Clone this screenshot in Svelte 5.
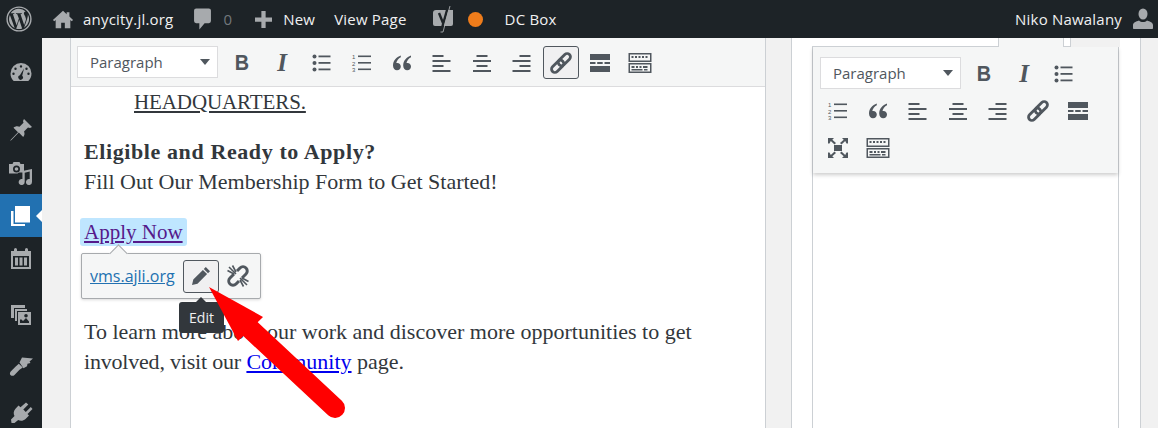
<script>
  const menu = [
    { id: 'gauge', h: 70 },
    { id: 'pin', h: 44 },
    { id: 'media', h: 42 },
    { id: 'pages', h: 43, active: true },
    { id: 'calendar', h: 44 },
    { id: 'gallery', h: 68 },
    { id: 'brush', h: 34 },
    { id: 'plugin', h: 60 }
  ];
  const mainTools = ['bold', 'italic', 'ul', 'ol', 'quote', 'left', 'center', 'right', 'link', 'more', 'kbd'];
  const sideTools = ['bold', 'italic', 'ul', 'ol', 'quote', 'left', 'center', 'right', 'link', 'more', 'full', 'kbd'];
</script>

{#snippet tool(name)}
  {#if name === 'bold'}
    <span class="glyph bold">B</span>
  {:else if name === 'italic'}
    <span class="glyph italic">I</span>
  {:else}
    <svg width="26" height="26" viewBox="0 0 26 26" fill="currentColor">
      {#if name === 'ul'}
        <circle cx="5.500" cy="6.500" r="2" /><circle cx="5.500" cy="13" r="2" /><circle cx="5.500" cy="19.500" r="2" />
        <rect x="9.500" y="5.500" width="12" height="1.800" /><rect x="9.500" y="12" width="12" height="1.800" /><rect x="9.500" y="18.500" width="12" height="1.800" />
      {:else if name === 'ol'}
        <text x="3" y="9" class="nums">1</text><text x="3" y="15.500" class="nums">2</text><text x="3" y="22" class="nums">3</text>
        <rect x="9" y="5.500" width="13" height="1.600" /><rect x="9" y="12" width="13" height="1.600" /><rect x="9" y="18.500" width="13" height="1.600" />
      {:else if name === 'quote'}
        <path d="M11.800 5.500C7.500 7 4 10.400 4 15.500c0 3 1.800 4.800 4 4.800s3.800-1.700 3.800-3.800-1.500-3.600-3.500-3.600c-.4 0-.8.100-1 .200.3-2.200 2.200-4.600 4.500-5.800z" />
        <path d="M22 5.500C17.700 7 14.200 10.400 14.200 15.500c0 3 1.800 4.800 4 4.800S22 18.600 22 16.500s-1.500-3.600-3.500-3.600c-.4 0-.8.100-1 .200.3-2.200 2.200-4.600 4.500-5.800z" />
      {:else if name === 'left'}
        <rect x="3.500" y="5" width="11" height="2" /><rect x="3.500" y="10" width="18" height="2" /><rect x="3.500" y="15" width="11" height="2" /><rect x="3.500" y="20" width="18" height="2" />
      {:else if name === 'center'}
        <rect x="7.500" y="5" width="11" height="2" /><rect x="4" y="10" width="18" height="2" /><rect x="7.500" y="15" width="11" height="2" /><rect x="4" y="20" width="18" height="2" />
      {:else if name === 'right'}
        <rect x="10.500" y="5" width="11" height="2" /><rect x="3.500" y="10" width="18" height="2" /><rect x="10.500" y="15" width="11" height="2" /><rect x="3.500" y="20" width="18" height="2" />
      {:else if name === 'link'}
        <g transform="rotate(-45 13 13)" fill="none" stroke="currentColor" stroke-width="2.800">
          <rect x="1" y="9.700" width="14.500" height="6.600" rx="3.300" />
          <rect x="10.500" y="9.700" width="14.500" height="6.600" rx="3.300" />
        </g>
      {:else if name === 'more'}
        <rect x="3" y="4" width="20" height="6" /><rect x="3" y="12" width="5.500" height="2" /><rect x="10.200" y="12" width="5.500" height="2" /><rect x="17.500" y="12" width="5.500" height="2" /><rect x="3" y="16" width="20" height="6" />
      {:else if name === 'full'}
        <rect x="9" y="10" width="8" height="6" />
        <path d="M3 3h6L7.300 4.700 11 8 9.500 9.500 5.800 6 4.500 8.500H3zM23 3h-6l1.700 1.700L15 8l1.500 1.500L20.200 6l1.300 2.500H23zM3 23h6l-1.700-1.700L11 18l-1.500-1.500L5.800 20l-1.300-2.500H3zM23 23h-6l1.700-1.700L15 18l1.500-1.500 3.700 3.500 1.300-2.500H23z" />
      {:else if name === 'kbd'}
        <path fill-rule="evenodd" d="M1.500 3h23v9h-23zM3 4.500v6h20v-6zM1.500 13h23v10h-23zM3 14.500v7h20v-7z" />
        <path d="M4.500 6h2v2h-2zM8 6h2v2H8zM11.500 6h2v2h-2zM15 6h2v2h-2zM18.500 6h2v2h-2zM4.500 16h3v2h-3zM9 16h2v2H9zM12.500 16h2v2h-2zM16 16h4.500v2H16zM4.500 19h11v1.500h-11zM17 19h3.500v1.500H17z" />
      {/if}
    </svg>
  {/if}
{/snippet}

{#snippet menuIcon(id)}
  <svg width="24" height="24" viewBox="0 0 24 24" fill="currentColor">
    {#if id === 'gauge'}
      <path fill-rule="evenodd" d="M12 2A10.500 10.500 0 0 0 1.500 12.500c0 3 1.200 5.700 3.200 7.500h14.600c2-1.800 3.200-4.500 3.200-7.500A10.500 10.500 0 0 0 12 2zM12 4.200a1.200 1.200 0 1 1 0 2.400 1.200 1.200 0 0 1 0-2.400zM6.500 6.500a1.200 1.200 0 1 1 0 2.400 1.200 1.200 0 0 1 0-2.400zM17.500 6.500a1.200 1.200 0 1 1 0 2.400 1.200 1.200 0 0 1 0-2.400zM4.500 11.500a1.200 1.200 0 1 1 0 2.400 1.200 1.200 0 0 1 0-2.400zM19.500 11.500a1.200 1.200 0 1 1 0 2.400 1.200 1.200 0 0 1 0-2.400zM15 7.500l-1.800 7.200a2.300 2.300 0 1 1-2.300-.5z" />
    {:else if id === 'pin'}
      <path d="M15 1l8 8-2 1-2-.5-4 4c1 2 .5 4-.8 5.500l-4.400-4.400L2.500 22 1 23l1-1.500 7-7.300-4.500-4.500C6 8.200 8.500 7.700 10.500 8.700l4-4L14 3z" />
    {:else if id === 'media'}
      <path fill-rule="evenodd" d="M0 3h3.500l1-2h6l1 2H15v8.500h-4.500c-.8 0-1.500.4-1.900 1H0zM7.500 4.500a3.500 3.500 0 1 0 0 7 3.500 3.500 0 0 0 0-7z" />
      <circle cx="7.500" cy="8" r="1.800" />
      <path d="M23 8v13a3 3 0 1 1-2.300-2.900V10.500l-5 1.200V21a3 3 0 1 1-2.300-2.900V10z" />
    {:else if id === 'pages'}
      <path d="M2 7h2.500v13H16v2H2z" />
      <rect x="6" y="2" width="15" height="16.500" />
    {:else if id === 'calendar'}
      <path fill-rule="evenodd" d="M2 4h3V2.500a1.500 1.500 0 0 1 3 0V4h8V2.500a1.500 1.500 0 0 1 3 0V4h3v18H2zM4 9v11h16V9zM6 10.500h3v8H6zM10.500 10.500h3v8h-3zM15 10.500h3v8h-3z" />
    {:else if id === 'gallery'}
      <path d="M2 2h14v3H5v10H2z" />
      <path d="M6 6h12v2H8v10H6z" />
      <path fill-rule="evenodd" d="M9 9h13v13H9zM11 16.500V20h9v-1.500l-3-3.500-3 3-1.500-1.500zM17 11a1.800 1.800 0 1 0 0 3.600 1.800 1.800 0 0 0 0-3.600z" />
    {:else if id === 'brush'}
      <path d="M10.500 8.500L13 3.500l11 1-3.500 3 1 1.500-3 .8-.5 2.500-3.500 2z" />
      <path d="M9.800 9.800l4 3.700-3.300 2.300-5 5.200c-1 1-2.700 1.200-3.800.2s-1-2.800 0-3.800l5-5z" />
    {:else if id === 'plugin'}
      <path d="M18.500 3l2.300 2-5 5 2.500 2.500 5-5 1.700 2-5 5 1.500 1.500-3.500 3.500c-2.200 2-5 2.300-7.300 1L7 23.500H4L3.500 20l3.500-3.500c-1.300-2.300-1-5.200 1-7.300L11 6l2 1.800z" transform="translate(-1.500 -1.500)" />
    {/if}
  </svg>
{/snippet}

<div class="admin">
  <header class="bar">
    <div class="bar-left">
      <svg class="wp" width="26" height="26" viewBox="0 0 24 24">
        <circle cx="12" cy="12" r="11" fill="none" stroke="currentColor" stroke-width="1.300" />
        <path fill="currentColor" d="M2.800 12c0 3.600 2.100 6.800 5.200 8.300L3.600 8.200A9.200 9.200 0 0 0 2.800 12zM18.200 11.500c0-1.100-.4-1.900-.8-2.500-.5-.8-.9-1.500-.9-2.300 0-.9.700-1.700 1.600-1.700h.1A9.200 9.200 0 0 0 4.300 6.700h.6c1 0 2.500-.1 2.500-.1.500 0 .6.700.1.800 0 0-.5.100-1.100.1l3.400 10.200 2.100-6.200-1.500-4c-.5 0-1-.1-1-.1-.5 0-.5-.8 0-.8 0 0 1.600.1 2.500.1 1 0 2.500-.1 2.500-.1.500 0 .6.700.1.800 0 0-.5.100-1.100.1l3.400 10.100 1-3.100c.4-1.300.7-2.200.7-3zM12.200 12.800l-2.800 8.100a9.200 9.200 0 0 0 5.600-.1l-.1-.1zM20.100 7.600c0 .3.100.6.100 1 0 .9-.2 2-.7 3.300l-2.800 8.100A9.200 9.200 0 0 0 20.100 7.600z" />
      </svg>
      <span class="item home">
        <svg width="22" height="22" viewBox="0 0 24 24" fill="currentColor"><path d="M12 3L1 13l1.500 1.500L4 13.200V22h6v-6h4v6h6v-8.800l1.500 1.300L23 13l-4-3.600V4.500h-3v2.200z" /></svg>
        <span class="label">anycity.jl.org</span>
      </span>
      <span class="item comments">
        <svg width="19" height="24" viewBox="0 0 18 22" fill="currentColor"><path d="M3 1h12a2 2 0 0 1 2 2v10a2 2 0 0 1-2 2h-4l-5 6v-6H3a2 2 0 0 1-2-2V3a2 2 0 0 1 2-2z" /></svg>
        <span class="count">0</span>
      </span>
      <span class="item new">
        <svg width="17" height="17" viewBox="0 0 16 16" fill="currentColor"><path d="M6 0h4v6h6v4h-6v6H6v-6H0V6h6z" /></svg>
        <span class="label">New</span>
      </span>
      <span class="label view">View Page</span>
      <svg class="yoast" width="24" height="30" viewBox="0 0 24 30">
        <path fill="currentColor" d="M4 6h17a2 2 0 0 1 0 0v14a2 2 0 0 1-2 2H3a2 2 0 0 1-2-2V9a3 3 0 0 1 3-3z" />
        <path fill="none" stroke="#1d2327" stroke-width="2.400" d="M7 9l4 10M16 2.500L9 27.500" />
        <path fill="none" stroke="currentColor" stroke-width=".9" d="M18 2l-7 26H8.500" />
      </svg>
      <span class="dot"></span>
      <span class="label dc">DC Box</span>
    </div>
    <div class="bar-right">
      <span class="label">Niko Nawalany</span>
      <svg width="20" height="22" viewBox="0 0 20 22" fill="currentColor"><ellipse cx="10" cy="6" rx="4.500" ry="5.500" /><path d="M0 20v-3c0-2.500 3-3.500 6-4.500 1 1 2.500 1.500 4 1.500s3-.5 4-1.500c3 1 6 2 6 4.500v3c0 .6-.4 1-1 1H1c-.6 0-1-.4-1-1z" /></svg>
    </div>
  </header>

  <div class="body">
    <nav class="menu">
      {#each menu as m}
        <div class="menu-item" class:active={m.active} style="height: {m.h}px">
          {@render menuIcon(m.id)}
        </div>
      {/each}
    </nav>

    <main class="editor">
      <div class="toolbar">
        <div class="select">Paragraph<i class="caret"></i></div>
        {#each mainTools as t}
          <button class="tool" class:on={t === 'link'}>{@render tool(t)}</button>
        {/each}
      </div>
      <div class="content">
        <p class="hq"><u>HEADQUARTERS.</u></p>
        <p class="eligible"><strong>Eligible and Ready to Apply?</strong><br />Fill Out Our Membership Form to Get Started!</p>
        <p class="apply"><a class="selected" href="#apply">Apply Now</a></p>
        <div class="popup">
          <a class="url" href="#vms">vms.ajli.org</a>
          <button class="tool edit">
            <svg width="20" height="20" viewBox="0 0 20 20" fill="currentColor"><path d="M14.800 1l4.200 4.200-2 2L12.800 3zM11.900 3.900l4.200 4.200L6.500 17.700 1 19l1.300-5.500z" /></svg>
          </button>
          <span class="unlink">
            <svg width="24" height="24" viewBox="0 0 24 24" fill="none" stroke="currentColor" stroke-width="3">
              <path d="M11 7l3-3a4.200 4.200 0 0 1 6 6l-4 4" />
              <path d="M13 17l-3 3a4.200 4.200 0 0 1-6-6l4-4" />
              <path stroke-width="1.600" d="M10 10L3 3M10 8L6.500 1.500M8 10L1.500 6.500M14 14l7 7M14 16l3.500 6.500M16 14l6.500 3.500" />
            </svg>
          </span>
        </div>
        <div class="tip">Edit</div>
        <p class="learn">To learn more about our work and discover more opportunities to get<br /><span class="tight">involved, visit our</span> <a class="blue" href="#community">Community</a> page.</p>
      </div>
    </main>

    <aside class="side">
      <div class="tabs">
        <div class="tab-a"></div>
        <div class="tab-b"></div>
        <div class="tab-c"></div>
        <div class="tab-d"></div>
      </div>
      <div class="side-editor">
        <div class="side-toolbar">
          <div class="select">Paragraph<i class="caret"></i></div>
          {#each sideTools as t}
            <button class="tool">{@render tool(t)}</button>
          {/each}
        </div>
      </div>
    </aside>
  </div>

  <svg class="arrow" width="160" height="150" viewBox="0 0 160 150">
    <path fill="#ff0000" d="M9 9L63 39 38 63z" />
    <path stroke="#ff0000" stroke-width="20" stroke-linecap="round" d="M45 46L135 130" />
  </svg>
</div>

<style>
  :global(body) {
    margin: 0;
    background: #f1f1f1;
  }

  .admin {
    position: relative;
    width: 1158px;
    height: 428px;
    overflow: hidden;
    font-family: "Open Sans", "Liberation Sans", sans-serif;
    background: #f1f1f1;
  }

  /* top bar */
  .bar {
    height: 38px;
    background: #1d2327;
    color: #f0f0f1;
    display: flex;
    justify-content: space-between;
    align-items: center;
    font-size: 15px;
    letter-spacing: 0.2px;
  }

  .bar-left,
  .bar-right,
  .item {
    display: flex;
    align-items: center;
  }

  .bar-left svg,
  .bar-right svg {
    color: #a7aaad;
  }

  .wp {
    margin-left: 6px;
  }

  .home {
    margin-left: 20px;
    gap: 9px;
  }

  .comments {
    margin-left: 20px;
  }

  .count {
    color: #72777c;
    margin-left: 11px;
  }

  .new {
    margin-left: 23px;
    gap: 11px;
  }

  .view {
    margin-left: 19px;
  }

  .yoast {
    margin-left: 25px;
  }

  .dot {
    width: 15px;
    height: 15px;
    border-radius: 50%;
    background: #ee7c1b;
    margin-left: 12px;
  }

  .dc {
    margin-left: 22px;
  }

  .bar-right {
    gap: 11px;
    margin-right: 5px;
  }

  /* sidebar */
  .body {
    display: flex;
    height: 390px;
  }

  .menu {
    width: 42px;
    flex: none;
    background: #1d2327;
    color: #a7aaad;
  }

  .menu-item {
    position: relative;
    display: flex;
    align-items: center;
    justify-content: center;
  }

  .menu-item.active {
    background: #2271b1;
    color: #fff;
  }

  .menu-item.active::after {
    content: "";
    position: absolute;
    right: 0;
    top: 50%;
    margin-top: -6px;
    border: 6px solid transparent;
    border-right-color: #fff;
    border-left: 0;
  }

  /* main editor */
  .editor {
    width: 696px;
    flex: none;
    margin-left: 28px;
    box-sizing: border-box;
    background: #fff;
    border-left: 1px solid #ccd0d4;
    border-right: 1px solid #ccd0d4;
  }

  .toolbar {
    height: 49px;
    box-sizing: border-box;
    background: #f5f6f6;
    border-bottom: 1px solid #dcdcde;
    padding: 8px 6px 0;
    display: flex;
    align-items: flex-start;
    gap: 2px;
  }

  .select {
    width: 141px;
    height: 32px;
    box-sizing: border-box;
    background: #fff;
    border: 1px solid #dcdcde;
    color: #50575e;
    font-size: 15px;
    line-height: 31px;
    padding-left: 12px;
    position: relative;
    margin-right: 3px;
  }

  .side-toolbar .select {
    margin-left: 1px;
    margin-right: 2px;
  }

  .caret {
    position: absolute;
    right: 7px;
    top: 12px;
    border: 5px solid transparent;
    border-top: 6px solid #50575e;
    border-bottom: 0;
  }

  .tool {
    width: 38px;
    height: 33px;
    padding: 0;
    border: 1px solid transparent;
    border-radius: 3px;
    background: none;
    color: #50575e;
    display: flex;
    align-items: center;
    justify-content: center;
  }

  .tool.on,
  .tool.edit {
    border-color: #50575e;
    background: #f0f0f1;
    width: 36px;
  }

  .glyph {
    line-height: 1;
  }

  .glyph.bold {
    font-family: "Liberation Sans", sans-serif;
    font-size: 22px;
    font-weight: 700;
    transform: scaleX(0.9);
  }

  .glyph.italic {
    font-family: "Liberation Serif", serif;
    font-size: 25px;
    font-style: italic;
    font-weight: 700;
  }

  .nums {
    font: 6px "Liberation Sans", sans-serif;
  }

  /* content */
  .content {
    position: relative;
    font-family: "Liberation Serif", serif;
    font-size: 22px;
    line-height: 30px;
    color: #32373c;
    padding: 0 13px;
  }

  .content p {
    margin: 0;
  }

  .hq {
    padding: 0 0 0 50px;
    font-size: 21px;
    letter-spacing: -0.1px;
  }

  .eligible {
    padding-top: 20px;
  }

  .eligible strong {
    letter-spacing: 0.6px;
  }

  .apply {
    padding-top: 20px;
    font-size: 21px;
  }

  .selected {
    color: #551a8b;
    background: #bfe6ff;
    border-radius: 3px;
    padding: 2px 4px;
    margin-left: -4px;
  }

  .popup {
    position: absolute;
    left: 10px;
    top: 166px;
    width: 180px;
    height: 46px;
    box-sizing: border-box;
    background: #f5f6f6;
    border: 1px solid #a7aaad;
    border-radius: 2px;
    box-shadow: 0 1px 3px rgba(0, 0, 0, 0.15);
    display: flex;
    align-items: center;
    font-family: "Open Sans", sans-serif;
    font-size: 16px;
  }

  .popup::before {
    content: "";
    position: absolute;
    left: 30px;
    top: -7px;
    width: 12px;
    height: 12px;
    background: #f5f6f6;
    border-left: 1px solid #a7aaad;
    border-top: 1px solid #a7aaad;
    transform: rotate(45deg);
  }

  .url {
    color: #2271b1;
    margin-left: 8px;
  }

  .tool.edit {
    margin-left: 8px;
    height: 33px;
    flex: none;
  }

  .unlink {
    margin-left: 7px;
    color: #50575e;
    display: flex;
  }

  .tip {
    position: absolute;
    left: 108px;
    top: 215px;
    width: 45px;
    height: 31px;
    background: #32373c;
    color: #f0f0f1;
    border-radius: 3px;
    text-align: center;
    font-family: "Open Sans", sans-serif;
    font-size: 14px;
    line-height: 31px;
    z-index: 1;
  }

  .tip::before {
    content: "";
    position: absolute;
    left: 17px;
    top: -5px;
    border: 5px solid transparent;
    border-bottom-color: #32373c;
    border-top: 0;
  }

  .learn {
    margin-top: 70px !important;
  }

  .tight {
    letter-spacing: -0.2px;
  }

  .blue {
    color: #0000ee;
  }

  /* side column */
  .side {
    width: 350px;
    flex: none;
    margin-left: 25px;
    box-sizing: border-box;
    background: #fff;
    border-left: 1px solid #ccd0d4;
    border-right: 1px solid #ccd0d4;
    padding: 0 21px 0 20px;
  }

  .tabs {
    height: 9px;
    display: flex;
    margin: 0 -1px 0 0;
  }

  .tab-a {
    width: 186px;
    background: #fff;
    border-right: 1px solid #ccd0d4;
    border-bottom: 1px solid #ccd0d4;
  }

  .tab-b {
    width: 64px;
    background: #f5f6f6;
  }

  .tab-c {
    width: 6px;
    background: #fff;
    border: solid #ccd0d4;
    border-width: 0 1px 1px;
  }

  .tab-d {
    flex: 1;
    background: #f1f1f1;
  }

  .side-editor {
    height: 381px;
    box-sizing: border-box;
    border-left: 1px solid #ccd0d4;
    border-right: 1px solid #ccd0d4;
  }

  .side-toolbar {
    height: 126px;
    box-sizing: border-box;
    background: #f5f6f6;
    box-shadow: 0 2px 4px rgba(0, 0, 0, 0.2);
    padding: 10px 6px 0;
    display: flex;
    flex-wrap: wrap;
    align-content: flex-start;
    gap: 4px 2px;
  }

  /* annotation on top of the screenshot */
  .arrow {
    position: absolute;
    left: 200px;
    top: 278px;
    z-index: 2;
  }
</style>
